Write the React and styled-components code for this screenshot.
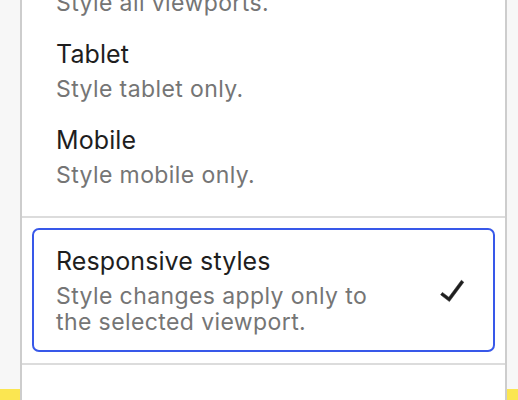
import styled, { createGlobalStyle } from 'styled-components';

const GlobalStyle = createGlobalStyle`
  html, body {
    margin: 0;
    padding: 0;
    background: #f7f7f7;
    font-family: 'Inter', 'Noto Sans', sans-serif;
    -webkit-font-smoothing: antialiased;
  }
`

const Canvas = styled.div`
  position: relative;
  width: 518px;
  height: 400px;
  overflow: hidden;
  display: flex;
  flex-direction: column;
  justify-content: flex-end;
`

const YellowBlock = styled.div`
  height: 11px;
  background: #fbe651;
`

const Popover = styled.div`
  position: absolute;
  top: -71px;
  left: 20px;
  width: 487px;
  box-sizing: border-box;
  background: #fff;
  border: 2px solid #cdcdcd;
  border-bottom: none;
`

const Group = styled.div`
  padding: ${props => props.$padding};
  & + & {
    border-top: 2px solid #dcdcdc;
  }
`

const Option = styled.div`
  display: flex;
  align-items: center;
  justify-content: space-between;
  border: 2px solid ${props => props.$selected ? '#3858e9' : 'transparent'};
  border-radius: 7px;
  padding: ${props => props.$selected ? '15px 17px 15px 22px' : '9px 17px 9px 22px'};
`

const Text = styled.div`
  display: flex;
  flex-direction: column;
  max-width: 330px;
`

const Label = styled.span`
  font-size: 25px;
  line-height: 32px;
  letter-spacing: 0.1px;
  color: #1e1e1e;
`

const Help = styled.span`
  margin-top: 6px;
  font-size: 23px;
  line-height: 26px;
  letter-spacing: 0.4px;
  color: #757575;
`

const Check = () => (
  <svg width="48" height="48" viewBox="0 0 24 24" fill="#1e1e1e" stroke="#1e1e1e" strokeWidth="0.25" strokeLinejoin="round">
    <path d="M16.7 7.1l-6.3 8.5-3.2-2.4-.9 1.2 4.4 3.4 7.2-9.7z" />
  </svg>
)

const options = [
  { label: 'Desktop', help: 'Style all viewports.' },
  { label: 'Tablet', help: 'Style tablet only.' },
  { label: 'Mobile', help: 'Style mobile only.' },
]

export default function App() {
  return <>
    <GlobalStyle />
    <Canvas>
      <YellowBlock />
      <Popover>
        <Group $padding="10px 10px 17px">
          {options.map(o => (
            <Option key={o.label}>
              <Text>
                <Label>{o.label}</Label>
                <Help>{o.help}</Help>
              </Text>
            </Option>
          ))}
        </Group>
        <Group $padding="10px 10px 11px">
          <Option $selected>
            <Text>
              <Label>Responsive styles</Label>
              <Help>Style changes apply only to the selected viewport.</Help>
            </Text>
            <Check />
          </Option>
        </Group>
        <Group $padding="0" style={{ height: 60 }} />
      </Popover>
    </Canvas>
  </>
}
